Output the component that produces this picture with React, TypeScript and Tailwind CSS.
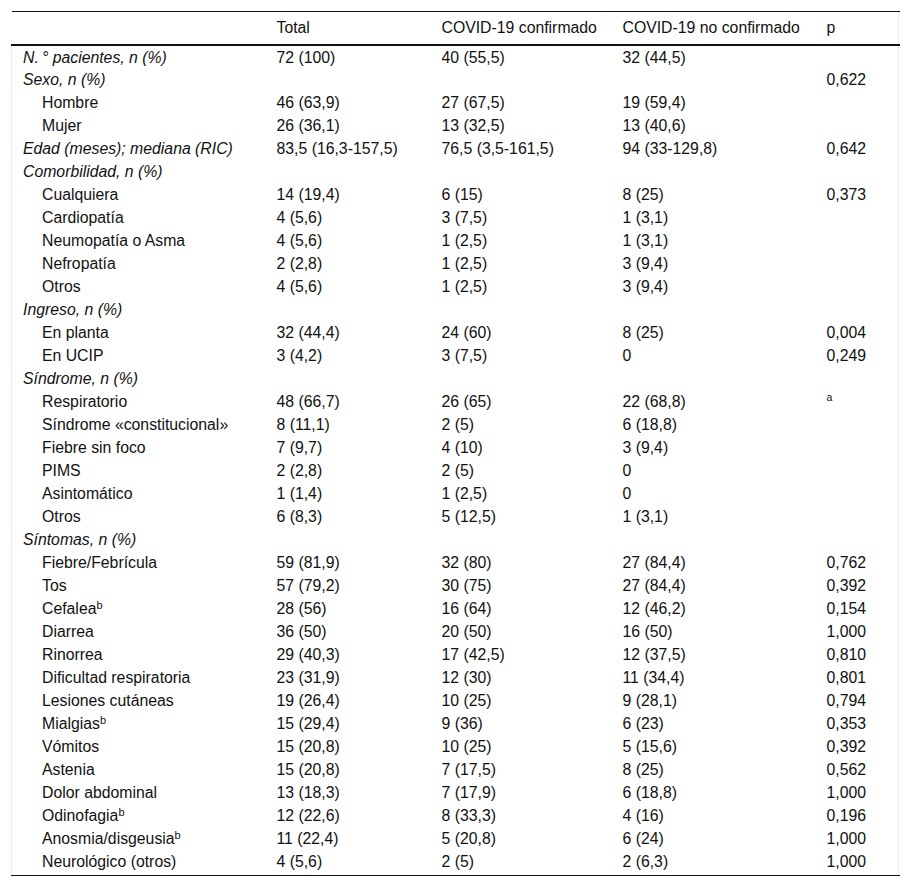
type Row = {
  label: string;
  sup?: string;
  kind: "item" | "top";
  total?: string;
  conf?: string;
  noconf?: string;
  p?: string;
  pSup?: string;
};

const rows: Row[] = [
  { label: "N.\u2009° pacientes, n (%)", kind: "top", total: "72 (100)", conf: "40 (55,5)", noconf: "32 (44,5)" },
  { label: "Sexo, n (%)", kind: "top", p: "0,622" },
  { label: "Hombre", kind: "item", total: "46 (63,9)", conf: "27 (67,5)", noconf: "19 (59,4)" },
  { label: "Mujer", kind: "item", total: "26 (36,1)", conf: "13 (32,5)", noconf: "13 (40,6)" },
  { label: "Edad (meses); mediana (RIC)", kind: "top", total: "83,5 (16,3-157,5)", conf: "76,5 (3,5-161,5)", noconf: "94 (33-129,8)", p: "0,642" },
  { label: "Comorbilidad, n (%)", kind: "top" },
  { label: "Cualquiera", kind: "item", total: "14 (19,4)", conf: "6 (15)", noconf: "8 (25)", p: "0,373" },
  { label: "Cardiopatía", kind: "item", total: "4 (5,6)", conf: "3 (7,5)", noconf: "1 (3,1)" },
  { label: "Neumopatía o Asma", kind: "item", total: "4 (5,6)", conf: "1 (2,5)", noconf: "1 (3,1)" },
  { label: "Nefropatía", kind: "item", total: "2 (2,8)", conf: "1 (2,5)", noconf: "3 (9,4)" },
  { label: "Otros", kind: "item", total: "4 (5,6)", conf: "1 (2,5)", noconf: "3 (9,4)" },
  { label: "Ingreso, n (%)", kind: "top" },
  { label: "En planta", kind: "item", total: "32 (44,4)", conf: "24 (60)", noconf: "8 (25)", p: "0,004" },
  { label: "En UCIP", kind: "item", total: "3 (4,2)", conf: "3 (7,5)", noconf: "0", p: "0,249" },
  { label: "Síndrome, n (%)", kind: "top" },
  { label: "Respiratorio", kind: "item", total: "48 (66,7)", conf: "26 (65)", noconf: "22 (68,8)", pSup: "a" },
  { label: "Síndrome «constitucional»", kind: "item", total: "8 (11,1)", conf: "2 (5)", noconf: "6 (18,8)" },
  { label: "Fiebre sin foco", kind: "item", total: "7 (9,7)", conf: "4 (10)", noconf: "3 (9,4)" },
  { label: "PIMS", kind: "item", total: "2 (2,8)", conf: "2 (5)", noconf: "0" },
  { label: "Asintomático", kind: "item", total: "1 (1,4)", conf: "1 (2,5)", noconf: "0" },
  { label: "Otros", kind: "item", total: "6 (8,3)", conf: "5 (12,5)", noconf: "1 (3,1)" },
  { label: "Síntomas, n (%)", kind: "top" },
  { label: "Fiebre/Febrícula", kind: "item", total: "59 (81,9)", conf: "32 (80)", noconf: "27 (84,4)", p: "0,762" },
  { label: "Tos", kind: "item", total: "57 (79,2)", conf: "30 (75)", noconf: "27 (84,4)", p: "0,392" },
  { label: "Cefalea", sup: "b", kind: "item", total: "28 (56)", conf: "16 (64)", noconf: "12 (46,2)", p: "0,154" },
  { label: "Diarrea", kind: "item", total: "36 (50)", conf: "20 (50)", noconf: "16 (50)", p: "1,000" },
  { label: "Rinorrea", kind: "item", total: "29 (40,3)", conf: "17 (42,5)", noconf: "12 (37,5)", p: "0,810" },
  { label: "Dificultad respiratoria", kind: "item", total: "23 (31,9)", conf: "12 (30)", noconf: "11 (34,4)", p: "0,801" },
  { label: "Lesiones cutáneas", kind: "item", total: "19 (26,4)", conf: "10 (25)", noconf: "9 (28,1)", p: "0,794" },
  { label: "Mialgias", sup: "b", kind: "item", total: "15 (29,4)", conf: "9 (36)", noconf: "6 (23)", p: "0,353" },
  { label: "Vómitos", kind: "item", total: "15 (20,8)", conf: "10 (25)", noconf: "5 (15,6)", p: "0,392" },
  { label: "Astenia", kind: "item", total: "15 (20,8)", conf: "7 (17,5)", noconf: "8 (25)", p: "0,562" },
  { label: "Dolor abdominal", kind: "item", total: "13 (18,3)", conf: "7 (17,9)", noconf: "6 (18,8)", p: "1,000" },
  { label: "Odinofagia", sup: "b", kind: "item", total: "12 (22,6)", conf: "8 (33,3)", noconf: "4 (16)", p: "0,196" },
  { label: "Anosmia/disgeusia", sup: "b", kind: "item", total: "11 (22,4)", conf: "5 (20,8)", noconf: "6 (24)", p: "1,000" },
  { label: "Neurológico (otros)", kind: "item", total: "4 (5,6)", conf: "2 (5)", noconf: "2 (6,3)", p: "1,000" },
];

export default function App() {
  return (
    <div className="bg-white w-[910px] h-[890px] pt-[11px] text-[15.8px] text-[#111] font-['Liberation_Sans',Arial,sans-serif]">
      <div className="ml-[11px] w-[888px] border-r border-[#ebebeb]">
        <table className="w-[888px] border-collapse table-fixed">
          <colgroup>
            <col className="w-[254px]" />
            <col className="w-[165px]" />
            <col className="w-[181px]" />
            <col className="w-[204px]" />
            <col className="w-[84px]" />
          </colgroup>
          <thead>
            <tr className="h-[33px] border-t border-[#111] border-b-2 border-b-[#111]">
              <th className="pl-[11px] font-normal text-left"></th>
              <th className="pl-[11px] font-normal text-left">Total</th>
              <th className="pl-[11px] font-normal text-left">COVID-19 confirmado</th>
              <th className="pl-[11px] font-normal text-left">COVID-19 no confirmado</th>
              <th className="pl-[11px] font-normal text-left">p</th>
            </tr>
          </thead>
          <tbody className="border-l border-[#ebebeb]">
            {rows.map((r, i) => (
              <tr key={i} className="h-[23px] leading-[18px]">
                <td
                  className={
                    r.kind === "item"
                      ? "pl-[30px] pt-[2px] pb-0 whitespace-nowrap"
                      : "pl-[11px] pt-[2px] pb-0 italic whitespace-nowrap"
                  }
                >
                  {r.label}
                  {r.sup && (
                    <span className="relative -top-[5px] text-[11px] leading-none">{r.sup}</span>
                  )}
                </td>
                <td className="pl-[11px] pt-[2px] pb-0 whitespace-nowrap">{r.total}</td>
                <td className="pl-[11px] pt-[2px] pb-0 whitespace-nowrap">{r.conf}</td>
                <td className="pl-[11px] pt-[2px] pb-0 whitespace-nowrap">{r.noconf}</td>
                <td className="pl-[11px] pt-[2px] pb-0 whitespace-nowrap">
                  {r.p}
                  {r.pSup && (
                    <span className="relative -top-[6px] text-[10.5px] leading-none">{r.pSup}</span>
                  )}
                </td>
              </tr>
            ))}
            <tr className="h-[3px] border-b border-[#111]">
              <td colSpan={5}></td>
            </tr>
          </tbody>
        </table>
      </div>
    </div>
  );
}
